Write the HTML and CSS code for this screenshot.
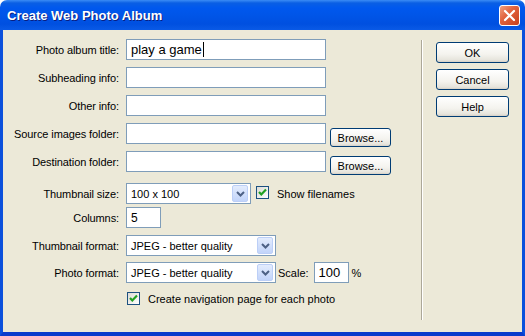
FILE: index.html
```html
<!DOCTYPE html>
<html lang="en">
<head>
  <meta charset="UTF-8" />
  <title>Create Web Photo Album</title>
  <link rel="stylesheet" href="styles.css">
</head>
<body>
  <div class="window">
    <div class="titlebar">
      <span class="title">Create Web Photo Album</span>
      <span class="close">
        <svg width="13" height="13" viewBox="0 0 13 13"><path d="M2 2 L11 11 M11 2 L2 11" stroke="#fff" stroke-width="2.2" stroke-linecap="round"/></svg>
      </span>
    </div>
    <div class="body">
      <div class="form">
        <div class="row first">
          <label>Photo album title:</label>
          <div class="field wide big">play a game<span class="caret"></span></div>
        </div>
        <div class="row">
          <label>Subheading info:</label>
          <div class="field wide"></div>
        </div>
        <div class="row">
          <label>Other info:</label>
          <div class="field wide"></div>
        </div>
        <div class="row">
          <label>Source images folder:</label>
          <div class="field wide"></div>
          <button class="btn browse">Browse...</button>
        </div>
        <div class="row">
          <label>Destination folder:</label>
          <div class="field wide"></div>
          <button class="btn browse">Browse...</button>
        </div>
        <div class="row thumb">
          <label>Thumbnail size:</label>
          <div class="combo small">100 x 100<span class="arrow"><svg width="9" height="6" viewBox="0 0 9 6"><path d="M1 1 L4.5 4.5 L8 1" fill="none" stroke="#4d6185" stroke-width="2"/></svg></span></div>
          <span class="check first-check"><svg width="11" height="11" viewBox="0 0 11 11"><path d="M2 5 L4.3 7.5 L9 2.5" fill="none" stroke="#21a121" stroke-width="2.2"/></svg></span>
          <span class="check-label">Show filenames</span>
        </div>
        <div class="row cols">
          <label>Columns:</label>
          <div class="field short mid">5</div>
        </div>
        <div class="row">
          <label>Thumbnail format:</label>
          <div class="combo">JPEG - better quality<span class="arrow"><svg width="9" height="6" viewBox="0 0 9 6"><path d="M1 1 L4.5 4.5 L8 1" fill="none" stroke="#4d6185" stroke-width="2"/></svg></span></div>
        </div>
        <div class="row photo">
          <label>Photo format:</label>
          <div class="combo">JPEG - better quality<span class="arrow"><svg width="9" height="6" viewBox="0 0 9 6"><path d="M1 1 L4.5 4.5 L8 1" fill="none" stroke="#4d6185" stroke-width="2"/></svg></span></div>
          <span class="scale-label">Scale:</span>
          <div class="field short big">100</div>
          <span class="pct">%</span>
        </div>
        <div class="row nav">
          <label></label>
          <span class="check"><svg width="11" height="11" viewBox="0 0 11 11"><path d="M2 5 L4.3 7.5 L9 2.5" fill="none" stroke="#21a121" stroke-width="2.2"/></svg></span>
          <span class="check-label">Create navigation page for each photo</span>
        </div>
      </div>
      <div class="separator"></div>
      <div class="buttons">
        <button class="btn side">OK</button>
        <button class="btn side">Cancel</button>
        <button class="btn side">Help</button>
      </div>
    </div>
  </div>
</body>
</html>
```

FILE: styles.css
```css
body {
  margin: 0;
  padding: 0;
  background-color: #ffffff;
  font-family: 'Liberation Sans', Arial, sans-serif;
  font-size: 11px;
  color: #000;
}
.window {
  width: 525px;
  height: 336px;
  display: flex;
  flex-direction: column;
}
.titlebar {
  height: 30px;
  flex: 0 0 30px;
  box-sizing: border-box;
  display: flex;
  align-items: center;
  justify-content: space-between;
  padding: 0 5px 0 7px;
  border-radius: 7px 7px 0 0;
  background: linear-gradient(#3b8cf5 0, #0a5fe4 3px, #0058ee 8px, #0055e8 50%, #0050e0 80%, #0a5ae6 100%);
}
.title {
  color: #fff;
  font-weight: bold;
  font-size: 13px;
  text-shadow: 1px 1px 0 #0a1e80;
}
.close {
  width: 21px;
  height: 21px;
  box-sizing: border-box;
  border: 1px solid #fff;
  border-radius: 3px;
  background: linear-gradient(135deg, #f0a080 0, #e2643f 40%, #c8401d 100%);
  display: flex;
  align-items: center;
  justify-content: center;
}
.body {
  flex: 1;
  display: flex;
  background-color: #ece9d8;
  border-left: 3px solid #0b50dc;
  border-right: 3px solid #0b50dc;
  border-bottom: 4px solid #0a3bcc;
}
.form {
  flex: 0 0 418px;
  padding-top: 2px;
}
.row {
  display: flex;
  align-items: center;
  margin-top: 7px;
}
.row label {
  flex: 0 0 116px;
  text-align: right;
  margin-right: 7px;
  letter-spacing: -0.1px;
}
.row.thumb {
  margin-top: 11px;
}
.row.cols {
  margin-top: 3px;
}
.row.photo {
  margin-top: 6px;
}
.row.nav {
  margin-top: 9px;
}
.field {
  height: 21px;
  box-sizing: border-box;
  border: 1px solid #7f9db9;
  background: #fff;
  padding: 0 4px;
  display: flex;
  align-items: center;
}
.field.wide {
  width: 200px;
}
.field.short {
  width: 35px;
}
.field.big {
  font-size: 13px;
}
.field.mid {
  font-size: 12px;
}
.caret {
  display: inline-block;
  width: 1px;
  height: 15px;
  background: #000;
  margin-left: 1px;
}
.btn {
  font-family: 'Liberation Sans', Arial, sans-serif;
  font-size: 11px;
  color: #000;
  box-sizing: border-box;
  border: 1px solid #003c74;
  border-radius: 3px;
  background: linear-gradient(#ffffff 0, #f4f3ee 60%, #e6e4dc 90%, #d6d0c5 100%);
  padding: 0;
  cursor: pointer;
}
.browse {
  width: 61px;
  height: 19px;
  margin-left: 4px;
  margin-top: 4px;
  margin-bottom: -4px;
}
.combo {
  width: 150px;
  height: 21px;
  box-sizing: border-box;
  border: 1px solid #7f9db9;
  background: #fff;
  padding: 0 2px 0 4px;
  display: flex;
  align-items: center;
  justify-content: space-between;
}
.combo.small {
  width: 125px;
}
.arrow {
  width: 16px;
  height: 17px;
  box-sizing: border-box;
  border: 1px solid #bccff7;
  border-radius: 2px;
  background: linear-gradient(#e3ecfd, #c2d4fa);
  display: flex;
  align-items: center;
  justify-content: center;
}
.check {
  width: 13px;
  height: 13px;
  box-sizing: border-box;
  border: 1px solid #1c5180;
  background: linear-gradient(135deg, #dcdbd5, #ffffff);
  display: flex;
  align-items: center;
  justify-content: center;
}
.first-check {
  margin-left: 5px;
  margin-top: -2px;
}
.row.nav .check {
  margin-left: 1px;
}
.check-label {
  margin-left: 8px;
}
.scale-label {
  margin-left: 2px;
  margin-right: 5px;
}
.pct {
  margin-left: 3px;
}
.separator {
  width: 1px;
  height: 280px;
  margin-top: 10px;
  background: #aca899;
  border-right: 1px solid #fff;
}
.buttons {
  display: flex;
  flex-direction: column;
  margin-left: 13px;
  padding-top: 12px;
  gap: 6px;
}
.side {
  width: 73px;
  height: 21px;
}
```
